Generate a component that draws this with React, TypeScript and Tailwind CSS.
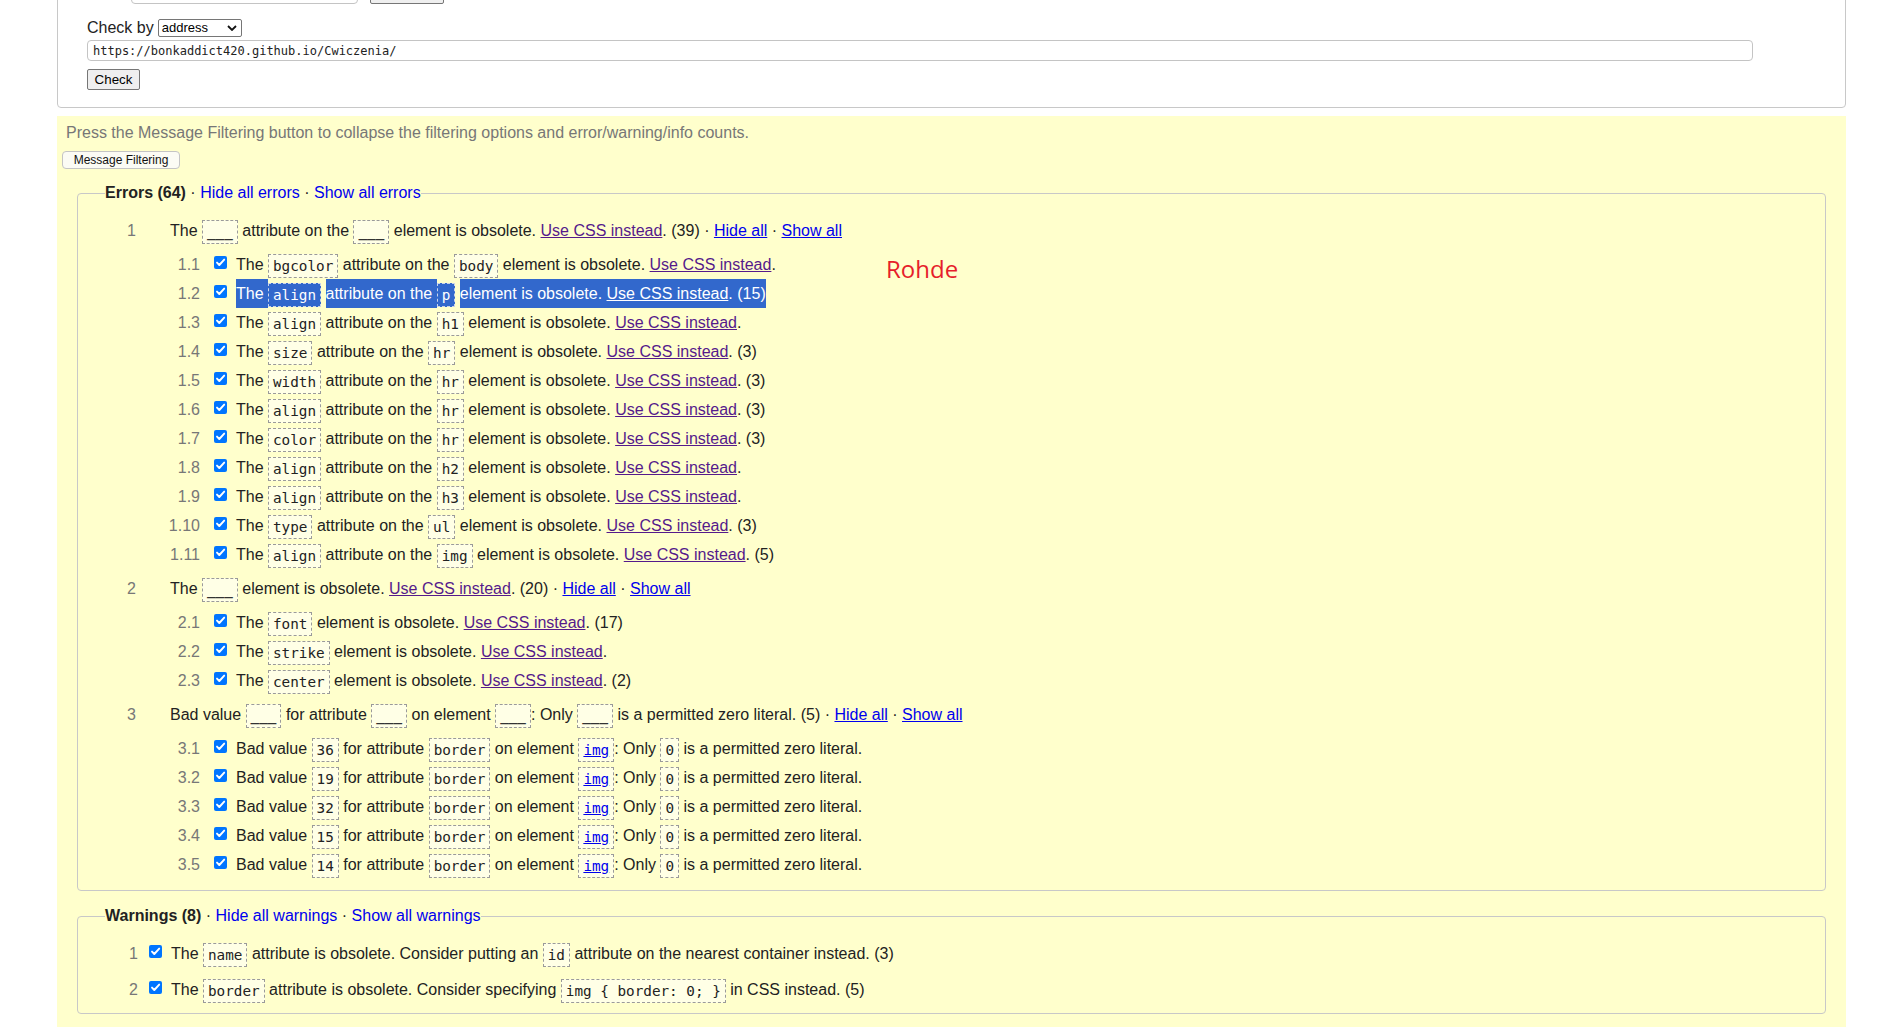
import React from "react";

const mono = "font-['DejaVu_Sans_Mono',monospace]";

const Code = ({ children, hl, link }: { children: React.ReactNode; hl?: boolean; link?: boolean }) => (
	<code
		className={
			"inline-block align-middle whitespace-pre border border-dashed px-[4px] leading-[22px] text-[14.3px] " +
			mono +
			(hl ? " border-[#c9d4ea] bg-[#3268cc] text-white" : " border-[#9a9a9a] bg-[#ffffe6] text-[#222]")
		}
	>
		{link ? <span className="text-[#0000ee] underline">{children}</span> : children}
	</code>
);

// placeholder shown in the group headings
const Blank = () => (
	<code
		className={
			"inline-block align-middle whitespace-pre border border-dashed border-[#9a9a9a] bg-[#ffffe6] px-[4px] leading-[22px] text-[14.3px] font-bold text-[#333] " +
			mono
		}
	>
		___
	</code>
);

const Css = () => <span className="text-[#551a8b] underline">Use CSS instead</span>;

const Hl = ({ children }: { children: React.ReactNode }) => (
	<span className="inline-block whitespace-pre bg-[#3268cc] leading-[29px] text-white">{children}</span>
);

const Tick = ({ className }: { className: string }) => (
	<svg viewBox="0 0 13 13" className={"h-[13px] w-[13px] shrink-0 " + className}>
		<rect x="0" y="0" width="13" height="13" rx="2" fill="#0075ff" />
		<path d="M3 6.6 L5.3 9 L10.2 3.6" stroke="#fff" strokeWidth="1.9" fill="none" strokeLinecap="round" strokeLinejoin="round" />
	</svg>
);

const HeaderRow = ({ n, children }: { n: string; children: React.ReactNode }) => (
	<div className="flex h-[29px] items-center whitespace-nowrap">
		<span className="w-[58px] text-right text-[#777]">{n}</span>
		<span className="ml-[34px] leading-[29px]">{children}</span>
	</div>
);

const SubRow = ({ n, children }: { n: string; children: React.ReactNode }) => (
	<div className="flex h-[29px] items-center whitespace-nowrap">
		<span className="w-[122px] text-right text-[#777]">{n}</span>
		<Tick className="mb-[4px] ml-[14px]" />
		<span className="ml-[9px] leading-[29px]">{children}</span>
	</div>
);

const HideShow = () => (
	<>
		{" · "}
		<span className="text-[#0000ee] underline">Hide all</span>
		{" · "}
		<span className="text-[#0000ee] underline">Show all</span>
	</>
);

const attrRows = [
	{ n: "1.3", a: "align", e: "h1", c: "" },
	{ n: "1.4", a: "size", e: "hr", c: "3" },
	{ n: "1.5", a: "width", e: "hr", c: "3" },
	{ n: "1.6", a: "align", e: "hr", c: "3" },
	{ n: "1.7", a: "color", e: "hr", c: "3" },
	{ n: "1.8", a: "align", e: "h2", c: "" },
	{ n: "1.9", a: "align", e: "h3", c: "" },
	{ n: "1.10", a: "type", e: "ul", c: "3" },
	{ n: "1.11", a: "align", e: "img", c: "5" },
];

const elRows = [
	{ n: "2.1", e: "font", c: "17" },
	{ n: "2.2", e: "strike", c: "" },
	{ n: "2.3", e: "center", c: "2" },
];

const badRows = [
	{ n: "3.1", v: "36" },
	{ n: "3.2", v: "19" },
	{ n: "3.3", v: "32" },
	{ n: "3.4", v: "15" },
	{ n: "3.5", v: "14" },
];

export default function App() {
	return (
		<div className="relative min-h-screen overflow-hidden bg-white font-['Liberation_Sans',Arial,sans-serif] text-[16px] text-[#222]">
			{/* form box, top cut off */}
			<div className="-mt-[30px] ml-[57px] w-[1789px] rounded-[4px] border border-[#c8c8c8] bg-white pb-[17px] pl-[29px] pt-[11px]">
				<div className="flex h-[22px]">
					<div className="ml-[44px] h-[22px] w-[227px] rounded-[4px] border border-[#c4c4c4]" />
					<div className="ml-[12px] h-[22px] w-[74px] rounded-[2px] border border-[#767676] bg-[#efefef]" />
				</div>
				<div className="mt-[15px] flex h-[18px] items-center">
					<span className="leading-[18px]">Check by</span>
					<div className="ml-[4px] flex h-[18px] w-[84px] items-center justify-between rounded-[2px] border border-[#767676] pl-[3px] pr-[4px] text-[13px] text-black">
						<span>address</span>
						<svg viewBox="0 0 10 6" className="h-[6px] w-[10px]">
							<path d="M1 1 L5 5 L9 1" stroke="#111" strokeWidth="1.8" fill="none" />
						</svg>
					</div>
				</div>
				<div className={"mt-[3px] flex h-[21px] w-[1666px] items-center rounded-[4px] border border-[#c4c4c4] pl-[5px] text-[12px] text-[#222] " + mono}>
					https://bonkaddict420.github.io/Cwiczenia/
				</div>
				<div className="mt-[8px] flex h-[21px] w-[53px] items-center justify-center rounded-[2px] border border-[#767676] bg-[#efefef] text-[13.33px] text-black">
					Check
				</div>
			</div>

			{/* results */}
			<div className="ml-[57px] mt-[8px] w-[1789px] bg-[#ffffcc] pb-[20px] pt-[7px]">
				<p className="pl-[9px] leading-[20px] text-[#777]">
					Press the Message Filtering button to collapse the filtering options and error/warning/info counts.
				</p>
				<div className="ml-[5px] mt-[8px] flex h-[18px] w-[118px] items-center justify-center rounded-[4px] border border-[#c4c4c4] bg-[#fbfbf4] text-[12px] text-[#111]">
					Message Filtering
				</div>

				<fieldset className="mx-[20px] mt-[14px] rounded-[4px] border border-[#c8c8c8] pb-[11px]">
					<legend className="ml-[27px] leading-[20px]">
						<b>Errors (64)</b>
						{" · "}
						<span className="text-[#0000ee]">Hide all errors</span>
						{" · "}
						<span className="text-[#0000ee]">Show all errors</span>
					</legend>
					<div className="flex flex-col gap-[5px] pt-[13px]">
						<div>
							<HeaderRow n="1">
								The <Blank /> attribute on the <Blank /> element is obsolete. <Css />. (39)
								<HideShow />
							</HeaderRow>
							<div className="mt-[5px]">
								<SubRow n="1.1">
									The <Code>bgcolor</Code> attribute on the <Code>body</Code> element is obsolete. <Css />.
								</SubRow>
								<SubRow n="1.2">
									<Hl>The </Hl>
									<Code hl>align</Code> <Hl>attribute on the </Hl>
									<Code hl>p</Code> <Hl>element is obsolete. <span className="underline">Use CSS instead</span>. (15)</Hl>
								</SubRow>
								{attrRows.map((r) => (
									<SubRow key={r.n} n={r.n}>
										The <Code>{r.a}</Code> attribute on the <Code>{r.e}</Code> element is obsolete. <Css />.
										{r.c ? ` (${r.c})` : ""}
									</SubRow>
								))}
							</div>
						</div>

						<div>
							<HeaderRow n="2">
								The <Blank /> element is obsolete. <Css />. (20)
								<HideShow />
							</HeaderRow>
							<div className="mt-[5px]">
								{elRows.map((r) => (
									<SubRow key={r.n} n={r.n}>
										The <Code>{r.e}</Code> element is obsolete. <Css />.{r.c ? ` (${r.c})` : ""}
									</SubRow>
								))}
							</div>
						</div>

						<div>
							<HeaderRow n="3">
								Bad value <Blank /> for attribute <Blank /> on element <Blank />: Only <Blank /> is a permitted zero literal. (5)
								<HideShow />
							</HeaderRow>
							<div className="mt-[5px]">
								{badRows.map((r) => (
									<SubRow key={r.n} n={r.n}>
										Bad value <Code>{r.v}</Code> for attribute <Code>border</Code> on element <Code link>img</Code>: Only{" "}
										<Code>0</Code> is a permitted zero literal.
									</SubRow>
								))}
							</div>
						</div>
					</div>
				</fieldset>

				<fieldset className="mx-[20px] mt-[15px] rounded-[4px] border border-[#c8c8c8] pb-[9px]">
					<legend className="ml-[27px] leading-[20px]">
						<b>Warnings (8)</b>
						{" · "}
						<span className="text-[#0000ee]">Hide all warnings</span>
						{" · "}
						<span className="text-[#0000ee]">Show all warnings</span>
					</legend>
					<div className="flex flex-col gap-[7px] pt-[13px]">
						<div className="flex h-[29px] items-center whitespace-nowrap">
							<span className="w-[60px] text-right text-[#777]">1</span>
							<Tick className="mb-[4px] ml-[11px]" />
							<span className="ml-[9px] leading-[29px]">
								The <Code>name</Code> attribute is obsolete. Consider putting an <Code>id</Code> attribute on the nearest container
								instead. (3)
							</span>
						</div>
						<div className="flex h-[29px] items-center whitespace-nowrap">
							<span className="w-[60px] text-right text-[#777]">2</span>
							<Tick className="mb-[4px] ml-[11px]" />
							<span className="ml-[9px] leading-[29px]">
								The <Code>border</Code> attribute is obsolete. Consider specifying <Code>{"img { border: 0; }"}</Code> in CSS
								instead. (5)
							</span>
						</div>
					</div>
				</fieldset>
			</div>

			<span className="absolute left-[886px] top-[257px] font-['Open_Sans',sans-serif] text-[24px] leading-[24px] text-[#e61e2b]">
				Rohde
			</span>
		</div>
	);
}
